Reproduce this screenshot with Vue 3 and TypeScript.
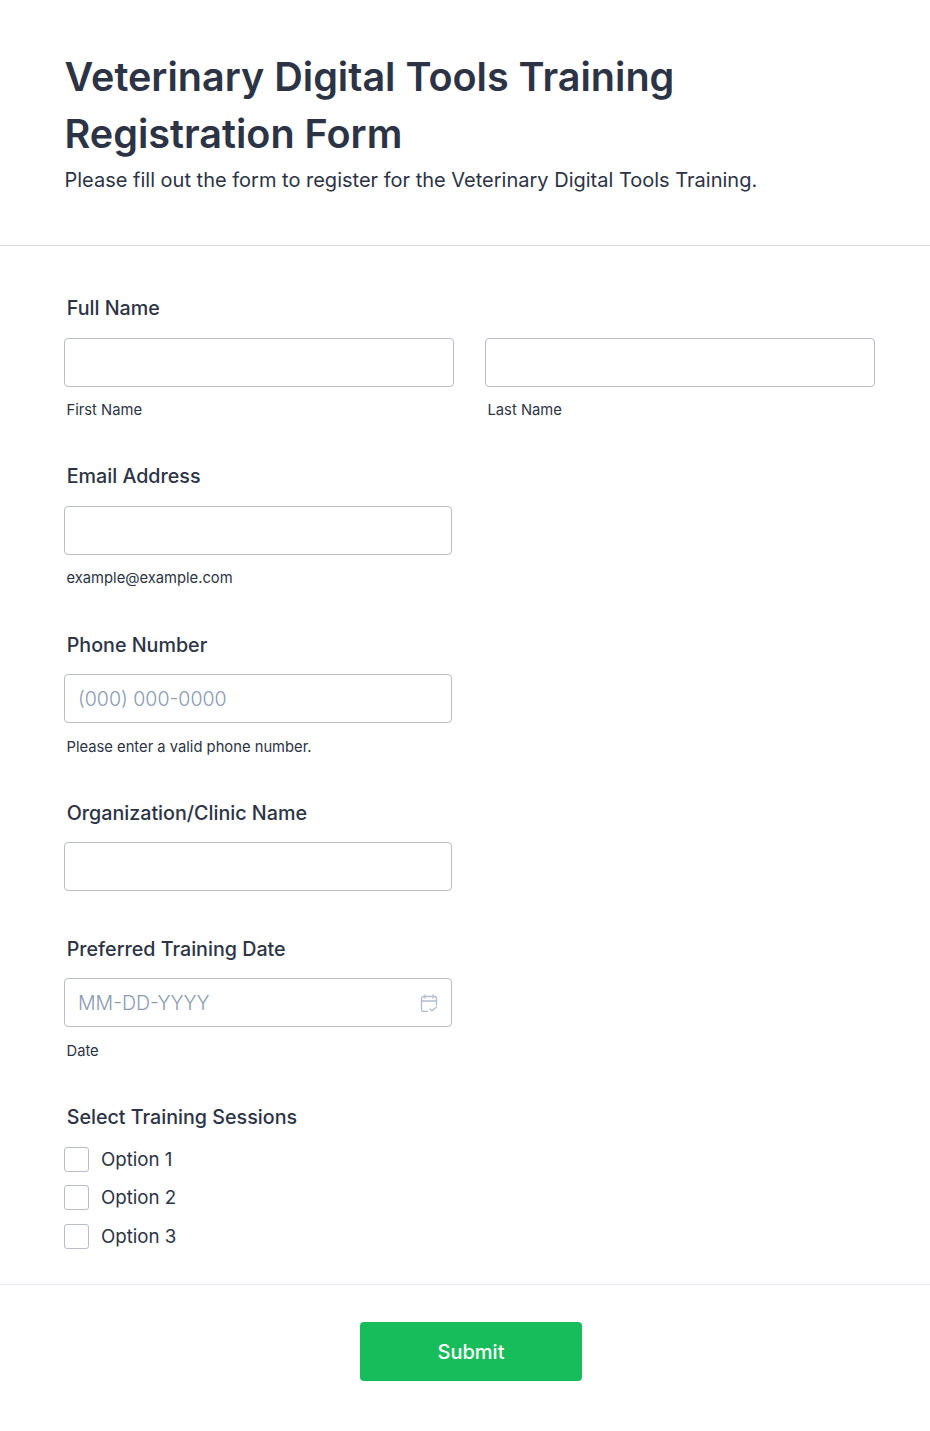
<script setup lang="ts">
const sessions = ['Option 1', 'Option 2', 'Option 3']
</script>

<template>
  <div class="page">
    <header class="head">
      <h1>Veterinary Digital Tools Training Registration Form</h1>
      <p>Please fill out the form to register for the Veterinary Digital Tools Training.</p>
    </header>

    <form class="body" @submit.prevent>
      <div class="field">
        <label class="lbl">Full Name</label>
        <div class="pair">
          <div>
            <input class="inp" type="text" />
            <div class="sub">First Name</div>
          </div>
          <div>
            <input class="inp" type="text" />
            <div class="sub">Last Name</div>
          </div>
        </div>
      </div>

      <div class="field">
        <label class="lbl">Email Address</label>
        <input class="inp single" type="text" />
        <div class="sub">example@example.com</div>
      </div>

      <div class="field">
        <label class="lbl">Phone Number</label>
        <input class="inp single" type="text" placeholder="(000) 000-0000" />
        <div class="sub">Please enter a valid phone number.</div>
      </div>

      <div class="field nosub">
        <label class="lbl">Organization/Clinic Name</label>
        <input class="inp single" type="text" />
      </div>

      <div class="field">
        <label class="lbl">Preferred Training Date</label>
        <div class="date single">
          <input class="inp" type="text" placeholder="MM-DD-YYYY" />
          <svg class="cal" width="18" height="18" viewBox="0 0 18 18" fill="none" stroke="#b3bcd0" stroke-width="1.3" stroke-linecap="round" stroke-linejoin="round">
            <path d="M7.5 17.5H3.5A2 2 0 0 1 1.5 15.5V4.5A2 2 0 0 1 3.5 2.5H14.5A2 2 0 0 1 16.5 4.5V11" />
            <path d="M1.5 7H16.5" />
            <path d="M5 0.8V4M13 0.8V4" />
            <path d="M10 15L12 16.8L16.5 13" />
          </svg>
        </div>
        <div class="sub">Date</div>
      </div>

      <div class="field last">
        <label class="lbl">Select Training Sessions</label>
        <div class="checks">
          <label v-for="s in sessions" :key="s" class="check">
            <span class="box"></span>
            <span>{{ s }}</span>
          </label>
        </div>
      </div>
    </form>

    <footer class="foot">
      <button class="submit" type="button">Submit</button>
    </footer>
  </div>
</template>

<style>
html,
body {
  background: #fff;
}
</style>

<style scoped>
.page {
  width: 930px;
  height: 1431px;
  background: #fff;
  color: #2c3345;
  font-family: Inter, "Noto Sans", sans-serif;
  box-sizing: border-box;
  overflow: hidden;
}
.head {
  height: 246px;
  box-sizing: border-box;
  padding: 49px 64px 0 64.5px;
  border-bottom: 1px solid #dadbe2;
}
h1 {
  margin: 0;
  font-size: 39.55px;
  line-height: 57px;
  font-weight: 600;
  max-width: 720px;
}
.head p {
  margin: 1px 0 0;
  font-size: 20px;
  line-height: 32px;
  font-weight: 400;
}
.body {
  padding: 50.2px 55px 0 64px;
  height: 1039px;
  box-sizing: border-box;
  border-bottom: 1px solid #eaebf2;
}
.field {
  margin-bottom: 44.25px;
}
.field.nosub {
  margin-bottom: 45.6px;
}
.lbl {
  display: block;
  font-size: 19.7px;
  font-weight: 500;
  line-height: 24px;
  margin: 0 0 17.4px 2.7px;
}
.pair {
  display: grid;
  grid-template-columns: 390px 390px;
  gap: 31px;
}
.inp {
  display: block;
  width: 100%;
  height: 49px;
  box-sizing: border-box;
  border: 1px solid #b8bdc9;
  border-radius: 4px;
  padding: 0 13px;
  font-family: inherit;
  font-size: 20px;
  color: #2c3345;
  background: #fff;
  outline: none;
}
.inp::placeholder {
  color: #8a9ab0;
  opacity: 1;
  font-weight: 300;
  font-size: 19.55px;
}
.single {
  width: 388px;
}
.sub {
  font-size: 14.75px;
  line-height: 20px;
  margin: 13.6px 0 0 2.5px;
  color: #2c3345;
  height: 20px;
}
.date {
  position: relative;
}
.cal {
  position: absolute;
  right: 14px;
  top: 16px;
}
.checks {
  display: flex;
  flex-direction: column;
  gap: 13.5px;
  margin-top: 0.9px;
}
.check {
  display: flex;
  align-items: center;
  gap: 12px;
  font-size: 18.7px;
  line-height: 25px;
}
.box {
  width: 25px;
  height: 25px;
  box-sizing: border-box;
  border: 1px solid #b8bdc9;
  border-radius: 3px;
}
.foot {
  display: flex;
  padding: 37px 0 0 360px;
}
.submit {
  width: 222px;
  height: 59px;
  border: none;
  border-radius: 4px;
  background: #18bd5b;
  color: #fff;
  font-family: inherit;
  font-size: 20px;
  font-weight: 500;
}
</style>
